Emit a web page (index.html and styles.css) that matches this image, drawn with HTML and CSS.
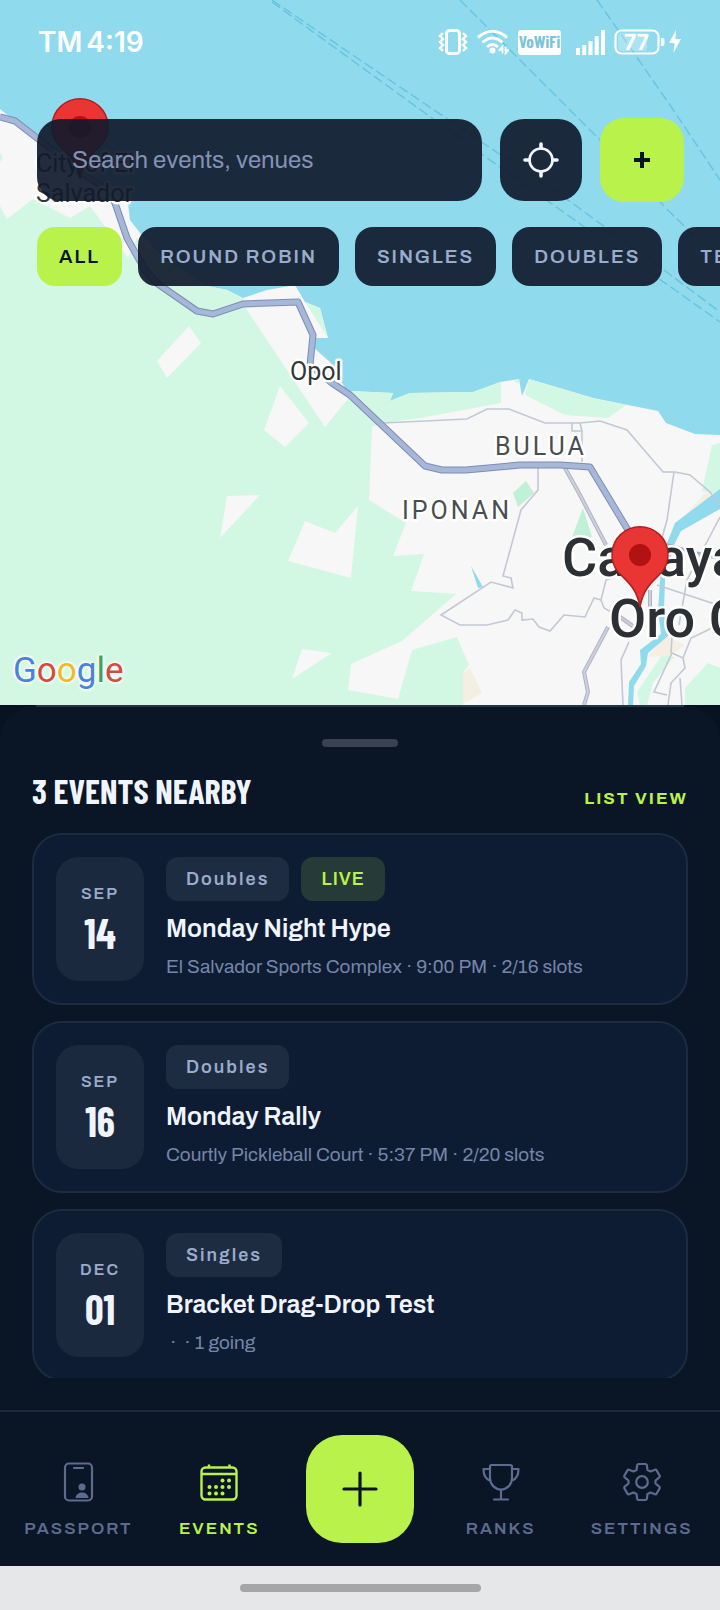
FILE: index.html
```html
<!DOCTYPE html>
<html lang="en">
<head>
  <meta charset="utf-8">
  <meta name="viewport" content="width=device-width, initial-scale=1">
  <title>Events</title>
  <link rel="stylesheet" href="styles.css">
</head>
<body>
  <section class="map">
    <svg class="map-canvas" viewBox="0 0 720 705" preserveAspectRatio="xMidYMid slice" aria-hidden="true">
      <defs>
        <g id="pin">
          <path d="M0 52C-3 34-12 27-22 17A28 28 0 1 1 22 17C12 27 3 34 0 52Z" fill="#ea3535" stroke="#b3201f" stroke-width="1.5"/>
          <circle r="11" fill="#b11212"/>
        </g>
      </defs>
      <rect width="720" height="705" fill="#8fdaed"/>

      <!-- land -->
      <path fill="#f7f7f7" d="M0 109L37 139L100 180L128 203L130 220L140 233L165 260L207 286L227 290L243 298L267 290L295 285L305 302L320 308L328 338L316 338L314 348L330 362L345 388L350 391L393 393L390 401L410 393L473 392L500 382L519 379L522 396L529 379L593 398L623 404L658 411L666 423L695 434L720 435V705H0Z"/>
      <path fill="#d2f7e2" d="M0 206L7 219L33 199L70 218L90 206L128 258L137 238L150 250L207 286L227 290L243 298L245 307L325 427L347 400L350 391L393 393L390 401L410 393L473 392L501 382V403L420 418L383 423L372 427L369 500L406 523L393 556L424 554L411 591L456 594L402 641L351 664L348 690L398 699L412 650L457 637L469 665L463 673V705H0ZM0 153L3 157L0 162Z"/>
      <path fill="#d2f7e2" d="M305 302L320 308L328 338ZM513 381L519 379L520 384ZM529 379L593 398L626 405L608 418L565 415L525 395ZM712 445L720 443V495L702 491ZM662 655L674 657L653 683L647 705H640L637 692ZM708 663L720 668V705H685V688Z"/>
      <path fill="#c0f0d5" d="M526 481L534 493L518 507L513 493ZM583 508L592 537H572Z"/>
      <path fill="#f5eee2" d="M463 673L470 668L482 693L463 704ZM706 492L716 496L683 517ZM665 636L685 645L670 656L648 657Z"/>
      <g fill="#f7f7f7">
        <path d="M189 326L201 343L167 378L157 361Z"/>
        <path d="M280 386L309 423L285 447L264 430Z"/>
        <path d="M227 496L260 495L220 538Z"/>
        <path d="M305 521L335 533L358 506L351 578L288 561Z"/>
        <path d="M302 649L332 653L292 679Z"/>
      </g>

      <!-- river -->
      <path fill="#8fdaed" d="M720 489L675 523L667 543L660 580L658 610L661 634L640 650L641 664L629 682L628 705H633L634 686L646 666L648 653L668 636L664 610L665 580L674 545L681 531L720 509ZM471 566L483 587L478 588Z"/>

      <!-- ferry routes -->
      <g fill="none" stroke="#68c3de" stroke-width="1.4" stroke-dasharray="10 4">
        <path d="M272 0L360 60L483 143L568 200L668 273L720 312"/>
        <path d="M272 2L360 66L483 155L583 226L675 290L720 322"/>
        <path d="M460 0L600 140L663 205L720 262"/>
        <path d="M597 0L620 33L672 108L720 180"/>
      </g>

      <!-- roads -->
      <g fill="none" stroke="#c3c8d5" stroke-width="1.6">
        <path d="M383 423L467 419L487 409H509L545 423H580L600 421L627 430L663 472H675L690 475L710 492L720 505"/>
        <path d="M674 472L667 520L660 545M572 423V431H582L580 423M582 431V462"/>
        <path d="M538 468V490L521 510L503 576L511 578L513 588L491 582L441 615L460 625H487L508 620L515 610L522 613V620L533 619L539 627L550 631L564 615L585 617L594 598L601 600L606 580L620 575"/>
        <path d="M601 600L604 608L622 618M629 642L621 660L623 705M657 585L715 604L720 598M720 517L700 555L687 580L679 625"/>
        <path d="M720 620L708 630L691 638L683 658L672 653L654 692L667 695M683 658L685 668L671 683L668 705M680 678L682 705M672 637L671 653"/>
      </g>
      <g fill="none" stroke="#adb3c6" stroke-width="4">
        <path d="M565 468L580 495L606 545M608 627L584 672L588 692L584 705M650 590V625M620 617L637 629"/>
      </g>
      <g fill="none" stroke="#ccd1dd" stroke-width="2">
        <path d="M565 468L580 495L606 545M608 627L584 672L588 692L584 705M650 590V625M620 617L637 629"/>
      </g>
      <path fill="none" stroke="#7c8db8" stroke-width="7" stroke-linejoin="round" d="M0 117L15 121L37 138L80 172L108 190L115 203L127 238L145 270L158 284L197 311L213 314L243 304L298 302L313 335L310 365L332 383L350 395L425 466L442 470H466L520 465H560L590 467L640 550"/>
      <path fill="none" stroke="#a6b7d7" stroke-width="5" stroke-linejoin="round" d="M0 117L15 121L37 138L80 172L108 190L115 203L127 238L145 270L158 284L197 311L213 314L243 304L298 302L313 335L310 365L332 383L350 395L425 466L442 470H466L520 465H560L590 467L640 550"/>
      <path fill="none" stroke="#9dabd0" stroke-width="3" d="M660 543L720 559"/>

      <g class="map-label">
        <text x="36" y="172">City of El</text>
        <text x="36" y="202">Salvador</text>
        <text x="290" y="380">Opol</text>
      </g>
      <g class="map-label map-label-area">
        <text x="495" y="455">BULUA</text>
        <text x="402" y="519">IPONAN</text>
      </g>
      <g class="map-label map-label-city">
        <text x="562" y="576">Cagayan</text>
        <text x="609" y="637">Oro City</text>
      </g>
      <use href="#pin" x="80" y="127"/>
      <use href="#pin" x="640" y="555"/>
    </svg>

    <div class="status-bar">
      <span class="clock"><span>TM</span><span>4:19</span></span>
      <span class="status-icons">
        <svg width="30" height="26" viewBox="0 0 30 26" fill="none" stroke="#fff">
          <rect x="8.500" y="1.500" width="13" height="23" rx="3" stroke-width="3"/>
          <path d="M5 4L2 7L5 10L2 13L5 16L2 19L5 22M25 4L28 7L25 10L28 13L25 16L28 19L25 22" stroke-width="2.400"/>
        </svg>
        <svg width="32" height="26" viewBox="0 0 32 26" fill="none" stroke="#fff" stroke-width="3">
          <path d="M1 8.500Q15.500-4 30 8.500M5.500 13.500Q15.500 4.500 25.500 13.500M10 18Q15.500 13 21 18"/>
          <circle cx="15.500" cy="21.500" r="3" fill="#fff" stroke="none"/>
          <path d="M25.500 24.500V17.500L22.500 21H25.500M28.500 17.500V24.500L31.500 21H28.500" stroke-width="1.600"/>
        </svg>
        <svg class="vowifi" width="43" height="26" viewBox="0 0 43 26">
          <rect y="1" width="43" height="25" rx="3" fill="#fff"/>
          <text x="21.500" y="19" text-anchor="middle">VoWiFi</text>
        </svg>
        <svg class="signal" width="29" height="26" viewBox="0 0 29 26" stroke="#fff" stroke-width="4">
          <path d="M2 19V26M8.200 16V26M14.500 12V26M20.700 7V26M27 1V26"/>
        </svg>
        <svg class="battery" width="68" height="26" viewBox="0 0 68 26">
          <rect x="1.500" y="1.500" width="43" height="23" rx="6" fill="none" stroke="#fff" stroke-width="2.200"/>
          <rect x="4" y="4" width="29" height="18" rx="3" fill="#fff" opacity="0.25"/>
          <path d="M47 9h1.500a2 2 0 0 1 2 2v4a2 2 0 0 1-2 2H47zM62 1L55 14H60.500L59.500 24L67 10H61.500Z" fill="#fff"/>
          <text x="22.500" y="21" text-anchor="middle">77</text>
        </svg>
      </span>
    </div>

    <div class="search-row">
      <input class="search" type="text" placeholder="Search events, venues" aria-label="Search events, venues">
      <button class="locate" aria-label="Use my location">
        <svg width="36" height="36" viewBox="0 0 36 36" fill="none" stroke="#f0f4ff" stroke-linecap="round">
          <circle cx="18" cy="18" r="11.500" stroke-width="2.600"/>
          <path d="M18 2V6M18 30V34M2 18H6M30 18H34" stroke-width="3.600"/>
        </svg>
      </button>
      <button class="add" aria-label="Add event">
        <svg width="16" height="16" viewBox="0 0 16 16"><path d="M8 0V16M0 8H16" stroke="#0a1424" stroke-width="4"/></svg>
      </button>
    </div>

    <div class="chips">
      <button class="chip chip-active">ALL</button>
      <button class="chip">ROUND ROBIN</button>
      <button class="chip">SINGLES</button>
      <button class="chip">DOUBLES</button>
      <button class="chip">TEAMS</button>
    </div>

    <div class="google"><span class="g-blue">G</span><span class="g-red">o</span><span class="g-yellow">o</span><span class="g-blue">g</span><span class="g-green">l</span><span class="g-red">e</span></div>
  </section>

  <div class="sheet-wrap">
    <main class="sheet">
      <div class="grabber"></div>
      <div class="sheet-head">
        <h1>3 EVENTS NEARBY</h1>
        <a class="list-link" href="#list">LIST VIEW</a>
      </div>
      <div class="event-list">
        <article class="event">
          <div class="date"><span class="month">SEP</span><span class="day">14</span></div>
          <div class="event-body">
            <div class="tags"><span class="tag">Doubles</span><span class="tag tag-live">LIVE</span></div>
            <h2>Monday Night Hype</h2>
            <p>El Salvador Sports Complex · 9:00 PM · 2/16 slots</p>
          </div>
        </article>
        <article class="event">
          <div class="date"><span class="month">SEP</span><span class="day">16</span></div>
          <div class="event-body">
            <div class="tags"><span class="tag">Doubles</span></div>
            <h2>Monday Rally</h2>
            <p>Courtly Pickleball Court · 5:37 PM · 2/20 slots</p>
          </div>
        </article>
        <article class="event">
          <div class="date"><span class="month">DEC</span><span class="day">01</span></div>
          <div class="event-body">
            <div class="tags"><span class="tag">Singles</span></div>
            <h2>Bracket Drag-Drop Test</h2>
            <p>&nbsp;· &nbsp;· 1 going</p>
          </div>
        </article>
      </div>
    </main>
  </div>

  <nav class="tabs">
    <a class="tab" href="#passport">
      <svg width="40" height="40" viewBox="0 0 40 40" fill="none" stroke="currentColor" stroke-width="2.200">
        <rect x="7" y="1.500" width="27" height="37" rx="4"/>
        <path d="M16 6H25" stroke-linecap="round"/>
        <circle cx="24" cy="25" r="3.500" fill="currentColor" stroke="none"/>
        <path d="M17.500 36C18 28.500 30 28.500 30.500 36Z" fill="currentColor" stroke="none"/>
      </svg>
      PASSPORT
    </a>
    <a class="tab tab-active" href="#events">
      <svg width="40" height="40" viewBox="0 0 40 40" fill="none" stroke="currentColor" stroke-width="2.400">
        <rect x="2.500" y="5.500" width="35" height="32" rx="4"/>
        <path d="M2.500 12H37.500M10 5V2.500M30.500 5V2.500"/>
        <g fill="currentColor" stroke="none">
          <circle cx="23.500" cy="18.500" r="2"/><circle cx="30" cy="18.500" r="2"/>
          <circle cx="10.500" cy="25" r="2"/><circle cx="17" cy="25" r="2"/><circle cx="23.500" cy="25" r="2"/><circle cx="30" cy="25" r="2"/>
          <circle cx="10.500" cy="31.500" r="2"/><circle cx="17" cy="31.500" r="2"/><circle cx="23.500" cy="31.500" r="2"/>
        </g>
      </svg>
      EVENTS
    </a>
    <button class="fab" aria-label="Create">
      <svg width="36" height="36" viewBox="0 0 36 36"><path d="M18 2V34M2 18H34" stroke="#0a1424" stroke-width="3.200" stroke-linecap="round"/></svg>
    </button>
    <a class="tab" href="#ranks">
      <svg width="40" height="40" viewBox="0 0 40 40" fill="none" stroke="currentColor" stroke-width="2.200" stroke-linecap="round" stroke-linejoin="round">
        <path d="M10.500 3H29.500Q31 3 31 4.500V16A11 11.500 0 0 1 9 16V4.500Q9 3 10.500 3ZM9 7H2.500C2.500 13 4 17 9.500 19M31 7H37.500C37.500 13 36 17 30.500 19M20 27.500V37M13 37.500H27"/>
      </svg>
      RANKS
    </a>
    <a class="tab" href="#settings">
      <svg width="40" height="40" viewBox="0 0 40 40" fill="none" stroke="currentColor" stroke-width="2.200" stroke-linejoin="round">
        <path d="M16.500 2H23.500Q24.500 2 24.800 3L25.500 8L28.500 9.500L33 7.800Q34 7.500 34.600 8.400L37.700 13.800Q38 14.800 37.300 15.400L33.500 18.500V21.500L37.300 24.600Q38 25.200 37.700 26.200L34.600 31.600Q34 32.500 33 32.200L28.500 30.500L25.500 32L24.800 37Q24.500 38 23.500 38H16.500Q15.500 38 15.200 37L14.500 32L11.500 30.500L7 32.200Q6 32.500 5.400 31.600L2.300 26.200Q2 25.200 2.700 24.600L6.500 21.500V18.500L2.700 15.400Q2 14.800 2.300 13.800L5.400 8.400Q6 7.500 7 7.800L11.500 9.500L14.500 8L15.200 3Q15.500 2 16.500 2Z"/>
        <circle cx="20" cy="20" r="5.800"/>
      </svg>
      SETTINGS
    </a>
  </nav>
  <div class="gesture-bar"><span></span></div>
</body>
</html>
```
FILE: styles.css
```css
* {
  box-sizing: border-box;
}
body {
  margin: 0;
  min-height: 100vh;
  display: flex;
  flex-direction: column;
  background: #0a1525;
  color: #f0f4ff;
  font-family: Archivo, Inter, "Liberation Sans", sans-serif;
  overflow-x: hidden;
}
button, input {
  font-family: inherit;
  border: 0;
  margin: 0;
}
button {
  display: flex;
  align-items: center;
  justify-content: center;
  padding: 0;
}
a {
  text-decoration: none;
}

/* map */
.map {
  position: relative;
  flex: 1 0 500px;
  display: flex;
  flex-direction: column;
  overflow: hidden;
}
.map-canvas {
  position: absolute;
  inset: 0;
  width: 100%;
  height: 100%;
}
.map > div {
  position: relative;
}
.map-label {
  font-family: Roboto, sans-serif;
  font-size: 25px;
  fill: #333639;
  stroke: #fff;
  stroke-width: 5px;
  stroke-linejoin: round;
  paint-order: stroke;
}
.map-label-area {
  fill: #4a4d50;
  letter-spacing: 3px;
}
.map-label-city {
  font-size: 54px;
  font-weight: 500;
  fill: #2c2f33;
}

.status-bar {
  display: flex;
  align-items: center;
  justify-content: space-between;
  height: 84px;
  padding: 0 38px;
  color: #fff;
}
.clock {
  display: flex;
  gap: 4px;
  font-family: Inter, sans-serif;
  font-size: 28px;
  font-weight: 600;
}
.status-icons {
  display: flex;
  gap: 9px;
}
.vowifi text {
  font: 700 17px "Barlow Condensed", "Roboto Condensed", Roboto, sans-serif;
  fill: #7cc4d8;
}
.signal {
  margin-left: 6px;
}
.battery text {
  font: 700 21px Inter, sans-serif;
  fill: #fff;
}

.search-row {
  display: flex;
  align-items: center;
  gap: 18px;
  margin-top: 34px;
  padding: 0 36px 0 37px;
}
.search {
  flex: 1;
  min-width: 0;
  height: 82px;
  padding: 0 35px;
  border-radius: 24px;
  background: rgba(16, 26, 43, 0.92);
  color: #f0f4ff;
  font-size: 24px;
}
.search::placeholder {
  color: #8492b4;
  opacity: 1;
}
.locate {
  width: 82px;
  height: 82px;
  border-radius: 24px;
  background: rgba(16, 26, 43, 0.92);
}
.add {
  width: 84px;
  height: 84px;
  border-radius: 24px;
  background: #b9f24b;
}

.chips {
  display: flex;
  gap: 16px;
  margin-top: 25px;
  padding-left: 37px;
  overflow: hidden;
}
.chip {
  flex: none;
  height: 59px;
  padding: 0 22px;
  border-radius: 18px;
  background: rgba(16, 26, 43, 0.92);
  color: #9babcb;
  font-size: 19px;
  font-weight: 600;
  letter-spacing: 2px;
}
.chip-active {
  background: #b9f24b;
  color: #0a1424;
}

.google {
  margin-top: auto;
  padding: 0 0 12px 13px;
  font-family: Roboto, sans-serif;
  font-size: 35px;
  font-weight: 400;
  line-height: 44px;
  text-shadow: 0 0 4px #fff, 0 0 4px #fff, 0 0 3px #fff;
}
.g-blue { color: #4a83dd; }
.g-red { color: #d34b40; }
.g-yellow { color: #ecbb26; }
.g-green { color: #3fa25c; }

/* bottom sheet */
.sheet-wrap {
  position: relative;
  background: #081321;
}
.sheet-wrap::before {
  content: "";
  position: absolute;
  top: 0;
  left: 36px;
  right: 36px;
  height: 2px;
  background: #253541;
}
.sheet {
  padding: 34px 32px 32px;
  border-radius: 36px 36px 0 0;
  background: #0a1525;
}
.grabber {
  width: 76px;
  height: 8px;
  margin: 0 auto;
  border-radius: 4px;
  background: #394252;
}
.sheet-head {
  display: flex;
  align-items: baseline;
  justify-content: space-between;
  margin: 23px 0 22px;
}
h1 {
  margin: 0;
  font: bold 34px/41px "Barlow Condensed", "Roboto Condensed", Roboto, sans-serif;
}
.list-link {
  color: #b9f24b;
  font-size: 17px;
  font-weight: 700;
  letter-spacing: 2px;
}
.event-list {
  display: flex;
  flex-direction: column;
  gap: 16px;
  max-height: 545px;
  overflow: hidden;
}
.event {
  flex: none;
  display: flex;
  gap: 22px;
  padding: 22px;
  border: 2px solid #1d2b40;
  border-radius: 30px;
  background: #0e1c33;
}
.date {
  display: flex;
  flex-direction: column;
  align-items: center;
  justify-content: center;
  gap: 7px;
  width: 88px;
  height: 124px;
  border-radius: 22px;
  background: #1b293e;
}
.month {
  color: #9babcb;
  font-size: 16px;
  font-weight: 600;
  line-height: 20px;
  letter-spacing: 2px;
}
.day {
  font: bold 41px/44px "Barlow Condensed", "Roboto Condensed", Roboto, sans-serif;
}
.event-body {
  flex: 1;
  min-width: 0;
}
.tags {
  display: flex;
  gap: 12px;
}
.tag {
  padding: 0 20px;
  border-radius: 12px;
  background: #1e2c42;
  color: #9babcb;
  font-size: 18px;
  font-weight: 600;
  line-height: 44px;
  letter-spacing: 2px;
}
.tag-live {
  background: #263a37;
  color: #b9f24b;
  letter-spacing: 1px;
}
h2 {
  margin: 12px 0 8px;
  font-size: 25px;
  font-weight: 600;
  line-height: 32px;
}
.event p {
  margin: 0;
  color: #7685a8;
  font-size: 19px;
  line-height: 28px;
}

/* tab bar */
.tabs {
  display: grid;
  grid-template-columns: repeat(5, 1fr);
  align-items: center;
  justify-items: center;
  height: 156px;
  padding: 0 8px;
  border-top: 2px solid #1c283b;
}
.tab {
  display: flex;
  flex-direction: column;
  align-items: center;
  gap: 16px;
  padding-top: 24px;
  color: #5d6c8e;
  font-size: 17px;
  font-weight: 600;
  line-height: 22px;
  letter-spacing: 2px;
}
.tab-active {
  color: #b9f24b;
}
.fab {
  width: 108px;
  height: 108px;
  border-radius: 36px;
  background: #b9f24b;
}
.gesture-bar {
  display: flex;
  justify-content: center;
  align-items: center;
  height: 44px;
  background: #e6e7e8;
}
.gesture-bar span {
  width: 241px;
  height: 8px;
  border-radius: 4px;
  background: #a6a6a6;
}
```
